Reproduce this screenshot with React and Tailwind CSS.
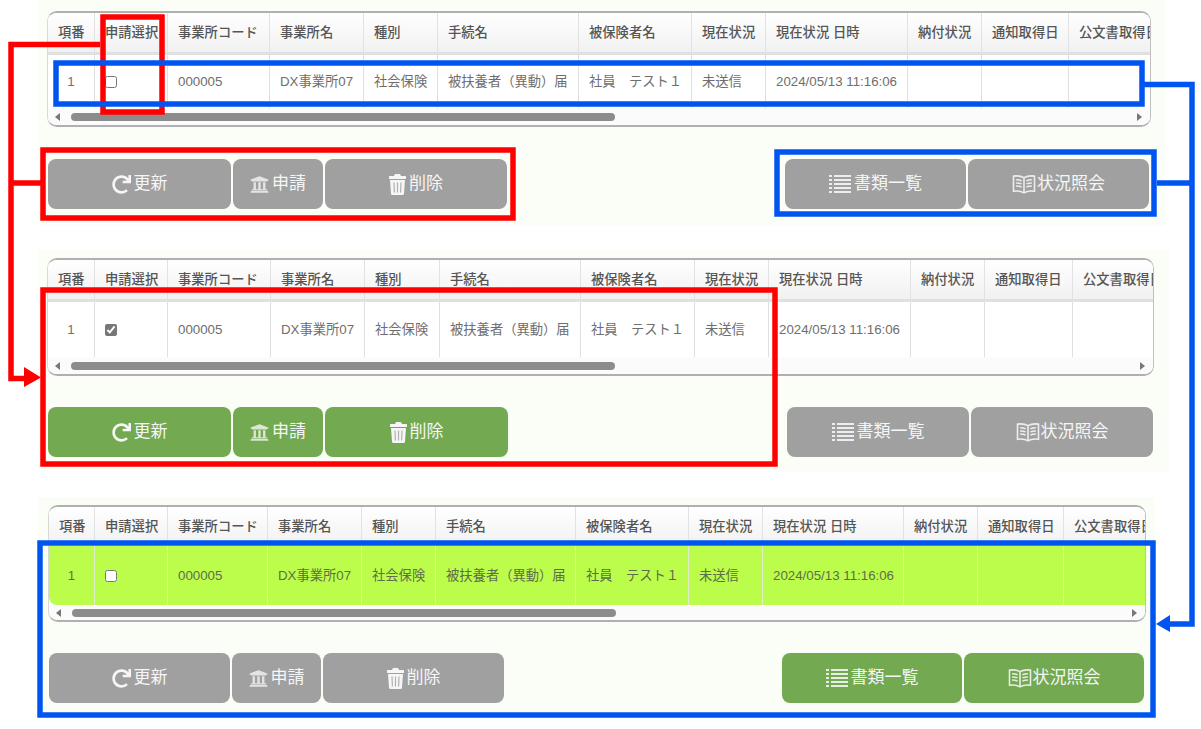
import { FaRedo, FaUniversity } from 'react-icons/fa';

const headers = ['項番', '申請選択', '事業所コード', '事業所名', '種別', '手続名', '被保険者名', '現在状況', '現在状況 日時', '納付状況', '通知取得日', '公文書取得日'];
const values = ['000005', 'DX事業所07', '社会保険', '被扶養者（異動）届', '社員　テスト１', '未送信', '2024/05/13 11:16:06', '', '', ''];

function ListIcon() {
  return (
    <svg width="22" height="20" viewBox="0 0 22 20" fill="currentColor" className="shrink-0 opacity-90">
      {[1, 5, 9, 13, 17].map((y) => (
        <g key={y}>
          <rect x="0" y={y} width="3" height="2" />
          <rect x="5" y={y} width="17" height="2" />
        </g>
      ))}
    </svg>
  );
}

function BookIcon() {
  return (
    <svg width="24" height="21" viewBox="0 0 22 20" fill="none" stroke="currentColor" strokeWidth="1.5" className="shrink-0 -mr-[2px] opacity-90">
      <path d="M11 3.500C8.500 2 4.500 1.500 1 2v14.500c3.500-.5 7.500 0 10 1.500 2.500-1.500 6.500-2 10-1.500V2c-3.500-.5-7.500 0-10 1.500zM11 3.500V18" />
      <path d="M3.500 5.500c1.800 0 3.500.2 5.200.9M3.500 8.500c1.800 0 3.500.2 5.200.9M3.500 11.500c1.800 0 3.500.2 5.200.9M13.300 6.400c1.700-.7 3.400-.9 5.200-.9M13.300 9.400c1.700-.7 3.400-.9 5.200-.9M13.300 12.400c1.700-.7 3.400-.9 5.200-.9" />
    </svg>
  );
}

function TrashIcon() {
  return (
    <svg width="17" height="21" viewBox="0 0 17 21" className="shrink-0">
      <path fill="currentColor" d="M6 0h5l1 2h4.500a.5.5 0 0 1 .5.500V5H0V2.500A.5.5 0 0 1 .5 2H5zM1 6h15l-1 13.500a1.500 1.500 0 0 1-1.500 1.500h-10A1.500 1.500 0 0 1 2 19.500z" />
      <path stroke="#000" strokeOpacity="0.28" strokeWidth="1.2" d="M5 8.500l.4 10M8.500 8.500v10M12 8.500l-.4 10" />
    </svg>
  );
}

function ActionButton({ width, green, icon, label }) {
  return (
    <button className={`${width} h-[50px] rounded-[8px] flex items-center justify-center gap-[3px] text-[17px] text-[#f6f6f6] ${green ? 'bg-[#72a951]' : 'bg-[#a0a0a0]'}`}>
      {icon}
      <span>{label}</span>
    </button>
  );
}

function DataTable({ gridCols, size, checked, active }) {
  const cellLine = active ? 'border-[#dfeeca]' : 'border-[#e0e0e0]';
  return (
    <div className={`${size} flex flex-col rounded-[10px] overflow-hidden border-t-2 border-b-2 border-l border-r border-t-[#b0b0b0] border-b-[#b0b0b0] border-l-[#d8d8d8] border-r-[#c0c0c0] bg-white`}>
      <div className={`grid ${gridCols} h-[39px] shrink-0 bg-gradient-to-b from-white to-[#f1f1f1]`}>
        {headers.map((h) => (
          <div key={h} className="pl-[10px] flex items-center whitespace-nowrap overflow-hidden text-[13.3px] font-medium text-[#555] border-r border-[#e2e2e2] last:border-r-0">
            {h}
          </div>
        ))}
      </div>
      {!active && <div className="h-[3px] shrink-0 bg-[#e0e0e0]" />}
      <div className={`grid ${gridCols} flex-1 text-[13.3px] ${active ? 'bg-[#bcfd4c] text-[#5e6d4a] rounded-bl-[8px]' : 'bg-white text-[#6e6e6e]'}`}>
        <div className={`pt-px flex items-center justify-center border-r ${cellLine}`}>1</div>
        <div className={`pl-[10px] pt-px flex items-center border-r ${cellLine}`}>
          <input type="checkbox" readOnly checked={checked} className="w-[12px] h-[12px] accent-[#777]" />
        </div>
        {values.map((v, i) => (
          <div key={i} className={`pl-[10px] pt-px flex items-center whitespace-nowrap border-r last:border-r-0 ${cellLine}`}>
            {v}
          </div>
        ))}
      </div>
      <div className={`${active ? 'h-[15px]' : 'h-[17px]'} shrink-0 bg-[#fbfbfb] flex items-center pl-[7px] pr-[8px] gap-[11px]`}>
        <div className="w-0 h-0 border-y-[4px] border-y-transparent border-r-[5px] border-r-[#777]" />
        <div className="w-[544px] h-[8px] rounded-full bg-[#8c8c8c]" />
        <div className="ml-auto w-0 h-0 border-y-[4px] border-y-transparent border-l-[5px] border-l-[#777]" />
      </div>
    </div>
  );
}

function Toolbar({ size, left, right, greenLeft, greenRight }) {
  return (
    <div className={`${size} ml-px flex justify-between`}>
      <div className="flex gap-[2px]">
        <ActionButton width={left[0]} green={greenLeft} label="更新" icon={<FaRedo size={19} />} />
        <ActionButton width={left[1]} green={greenLeft} label="申請" icon={<FaUniversity size={19} className="opacity-80" />} />
        <ActionButton width={left[2]} green={greenLeft} label="削除" icon={<TrashIcon />} />
      </div>
      <div className="flex gap-[2px]">
        <ActionButton width={right} green={greenRight} label="書類一覧" icon={<ListIcon />} />
        <ActionButton width={right} green={greenRight} label="状況照会" icon={<BookIcon />} />
      </div>
    </div>
  );
}

// hand-drawn call-outs that sit on top of the screenshots
function Annotations() {
  return (
    <svg className="absolute inset-0 pointer-events-none" width="1201" height="729" fill="none" strokeWidth="5.500">
      <g stroke="#ff0000">
        <rect x="103" y="17" width="59" height="95" />
        <rect x="43" y="150" width="470" height="68" />
        <rect x="43" y="290" width="732" height="174" />
        <path d="M100 44.500H11V378.500H28M11 183H41" />
      </g>
      <path d="M24 367L41 377.500L24 387Z" fill="#ff0000" />
      <g stroke="#0055f0">
        <rect x="56" y="63" width="1086" height="41" />
        <rect x="777" y="152" width="377" height="62" />
        <rect x="40" y="543" width="1113" height="172" />
        <path d="M1144 84.500H1192V624H1165M1157 183H1192" />
      </g>
      <path d="M1170 615L1156 624L1170 632Z" fill="#0055f0" />
    </svg>
  );
}

export default function App() {
  return (
    <div className="relative w-[1201px] h-[729px] overflow-hidden bg-white font-['Liberation_Sans','Noto_Sans_CJK_JP',sans-serif]">
      <div className="ml-[38px] w-[1127px] h-[226px] pl-[9px] pt-[11px] bg-[#fbfef6]">
        <DataTable size="w-[1104px] h-[116px]" gridCols="grid-cols-[47px_73px_102px_94px_74px_141px_113px_74px_142px_74px_87px_1fr]" />
        <div className="mt-[32px]">
          <Toolbar size="w-[1101px]" left={['w-[183px]', 'w-[90px]', 'w-[182px]']} right="w-[181px]" />
        </div>
      </div>

      <div className="mt-[24px] ml-[38px] w-[1131px] h-[222px] pl-[9px] pt-[8px] bg-[#fbfef6]">
        <DataTable size="w-[1107px] h-[118px]" checked gridCols="grid-cols-[47px_73px_103px_94px_75px_141px_114px_74px_142px_74px_88px_1fr]" />
        <div className="mt-[31px]">
          <Toolbar size="w-[1105px]" left={['w-[183px]', 'w-[90px]', 'w-[183px]']} right="w-[182px]" greenLeft />
        </div>
      </div>

      <div className="mt-[25px] ml-[38px] w-[1117px] h-[221px] pl-[10px] pt-[8px] bg-[#fbfef6]">
        <DataTable size="w-[1098px] h-[117px]" active gridCols="grid-cols-[46px_73px_100px_94px_74px_140px_113px_74px_141px_74px_86px_1fr]" />
        <div className="mt-[31px]">
          <Toolbar size="w-[1095px]" left={['w-[181px]', 'w-[89px]', 'w-[181px]']} right="w-[180px]" greenRight />
        </div>
      </div>

      <Annotations />
    </div>
  );
}
